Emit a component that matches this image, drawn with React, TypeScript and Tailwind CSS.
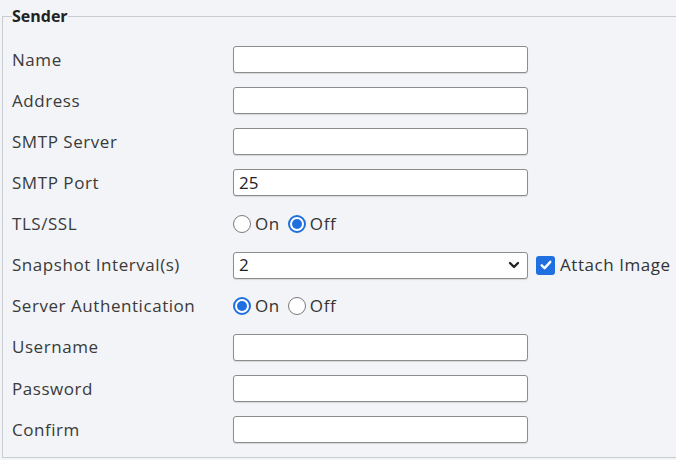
import { ChevronDown } from 'lucide-react';

function TextBox({ value = '' }: { value?: string }) {
  return (
    <div className="w-[295px] h-[27px] bg-white border border-[#8c8c8c] rounded-[3px] shadow-[0_1px_1px_rgba(0,0,0,0.12)] flex items-center px-[5px] text-[17px] text-[#222]">
      {value}
    </div>
  );
}

function Radio({ checked }: { checked: boolean }) {
  return checked ? (
    <span className="w-[18px] h-[18px] rounded-full border-[2px] border-[#1f6fe0] bg-white flex items-center justify-center">
      <span className="w-[10px] h-[10px] rounded-full bg-[#1f6fe0]" />
    </span>
  ) : (
    <span className="w-[18px] h-[18px] rounded-full border border-[#7a7a7a] bg-white" />
  );
}

function OnOff({ on }: { on: boolean }) {
  return (
    <div className="flex items-center text-[17px] tracking-[0.6px] text-[#333]">
      <Radio checked={on} />
      <span className="ml-[4px] mr-[8px]">On</span>
      <Radio checked={!on} />
      <span className="ml-[4px]">Off</span>
    </div>
  );
}

function Row({ label, children }: { label: string; children?: React.ReactNode }) {
  return (
    <div className="h-[41.1px] flex items-center">
      <div className="w-[221px] text-[17px] tracking-[0.55px] text-[#3a3a3a]">{label}</div>
      {children}
    </div>
  );
}

export default function App() {
  return (
    <div
      className="w-[676px] h-[460px] bg-[#f2f4f7] overflow-hidden"
      style={{ fontFamily: '"Open Sans", "Noto Sans", sans-serif' }}
    >
      <fieldset className="ml-[2px] mt-[5px] w-[720px] h-[453px] border border-[#c9cdd2] pl-[9px]">
        <legend className="px-0 text-[16px] font-bold text-[#222] leading-[22px]">Sender</legend>
        <div className="pt-[12px] flex flex-col">
          <Row label="Name">
            <TextBox />
          </Row>
          <Row label="Address">
            <TextBox />
          </Row>
          <Row label="SMTP Server">
            <TextBox />
          </Row>
          <Row label="SMTP Port">
            <TextBox value="25" />
          </Row>
          <Row label="TLS/SSL">
            <OnOff on={false} />
          </Row>
          <Row label="Snapshot Interval(s)">
            <div className="w-[295px] h-[27px] bg-white border border-[#8c8c8c] rounded-[3px] shadow-[0_1px_1px_rgba(0,0,0,0.12)] flex items-center justify-between pl-[5px] pr-[5px] text-[17px] text-[#222]">
              <span>2</span>
              <ChevronDown size={16} strokeWidth={3.5} className="text-[#222]" />
            </div>
            <span className="ml-[8px] w-[19px] h-[19px] rounded-[3px] bg-[#1f6fe0] flex items-center justify-center">
              <svg width="14" height="14" viewBox="0 0 13 13">
                <path d="M2.5 6.8 L5.2 9.4 L10.5 3.6" fill="none" stroke="white" strokeWidth="2.2" strokeLinecap="round" strokeLinejoin="round" />
              </svg>
            </span>
            <span className="ml-[5px] text-[17px] tracking-[0.55px] text-[#333] whitespace-nowrap">Attach Image</span>
          </Row>
          <Row label="Server Authentication">
            <OnOff on={true} />
          </Row>
          <Row label="Username">
            <TextBox />
          </Row>
          <Row label="Password">
            <TextBox />
          </Row>
          <Row label="Confirm">
            <TextBox />
          </Row>
        </div>
      </fieldset>
    </div>
  );
}
